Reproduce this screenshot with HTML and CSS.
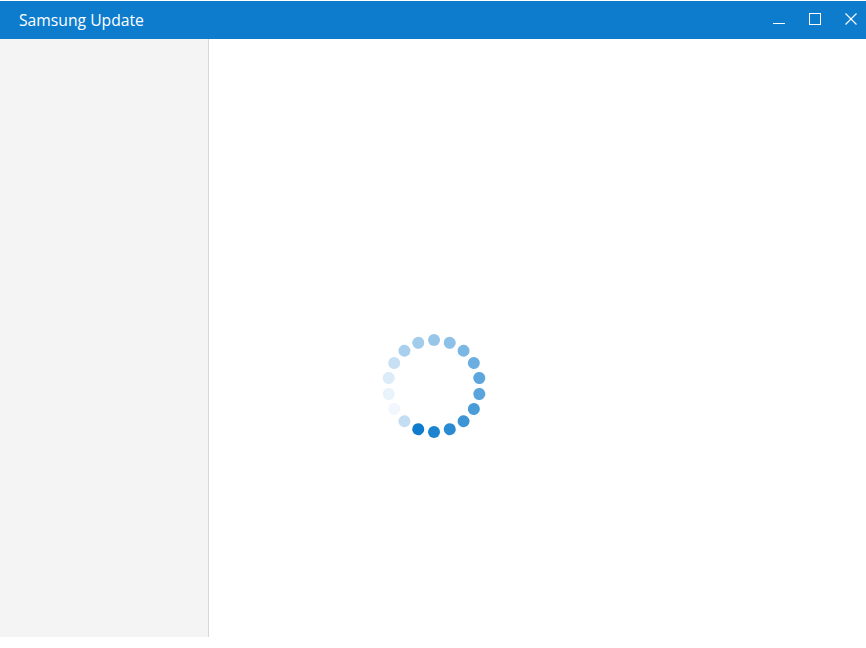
FILE: index.html
```html
<!DOCTYPE html>
<html lang="en">

<head>
    <meta charset="UTF-8">
    <meta name="viewport" content="width=device-width, initial-scale=1.0">
    <title>Samsung Update</title>
    <link rel="stylesheet" href="styles.css">
</head>

<body>
    <div class="top-strip"></div>

    <div class="titlebar">
        <div class="title">Samsung Update</div>
        <div class="controls">
            <div class="ctl">
                <svg width="14" height="14" viewBox="0 0 14 14">
                    <path d="M1 11.5H13" stroke="#fff" stroke-width="1" fill="none" />
                </svg>
            </div>
            <div class="ctl">
                <svg width="14" height="14" viewBox="0 0 14 14">
                    <rect x="1.5" y="1.5" width="11" height="11" stroke="#fff" stroke-width="1" fill="none" />
                </svg>
            </div>
            <div class="ctl">
                <svg width="14" height="14" viewBox="0 0 14 14">
                    <path d="M1.5 1.5L12.5 12.5M12.5 1.5L1.5 12.5" stroke="#fff" stroke-width="1.1" fill="none" />
                </svg>
            </div>
        </div>
    </div>

    <div class="main">
        <div class="sidebar"></div>
        <div class="content">
            <div id="spinner"></div>
        </div>
    </div>

    <script>
        const spinner = document.querySelector("#spinner")

        // 每個點的透明度，從正上方順時針
        const alphas = [0.43, 0.47, 0.55, 0.61, 0.67, 0.69, 0.75, 0.80, 0.88,
            0.94, 1, 0.25, 0.06, 0.095, 0.15, 0.23, 0.36, 0.39]

        for (let i = 0; i < 18; i++) {
            const arm = document.createElement("div")
            arm.className = "arm"
            arm.style.transform = `rotate(${i * 20}deg)`
            const dot = document.createElement("div")
            dot.className = "dot"
            dot.style.opacity = alphas[i]
            arm.appendChild(dot)
            spinner.appendChild(arm)
        }
    </script>
</body>

</html>
```

FILE: styles.css
```css
html,
body {
    margin: 0;
    padding: 0;
    background-color: #ffffff;
    font-family: "Open Sans", "Noto Sans", sans-serif;
}

.top-strip {
    height: 1px;
    background-color: #ffffff;
}

.titlebar {
    display: flex;
    align-items: center;
    justify-content: space-between;
    height: 38px;
    background-color: #0e7ccd;
    color: #ffffff;
}

.title {
    padding-left: 19px;
    font-size: 15.7px;
    padding-bottom: 1px;
}

.controls {
    display: flex;
    height: 100%;
    padding-bottom: 2px;
    box-sizing: border-box;
}

.ctl {
    display: flex;
    align-items: center;
    justify-content: center;
    width: 36px;
}

.ctl:last-child {
    width: 30px;
    padding-left: 3px;
}

.main {
    display: flex;
    height: 598px;
}

.sidebar {
    width: 208px;
    background-color: #f4f4f4;
    border-right: 1px solid #d6d6d6;
}

.content {
    flex: 1;
    padding-top: 301px;
    padding-left: 225px;
}

#spinner {
    position: relative;
    width: 0;
    height: 0;
    left: 0;
    top: 46px;
}

.arm {
    position: absolute;
    left: 0;
    top: 0;
}

.dot {
    position: absolute;
    width: 12px;
    height: 12px;
    border-radius: 50%;
    background-color: #0e7bcc;
    top: -52.5px;
    left: -6px;
}
```
